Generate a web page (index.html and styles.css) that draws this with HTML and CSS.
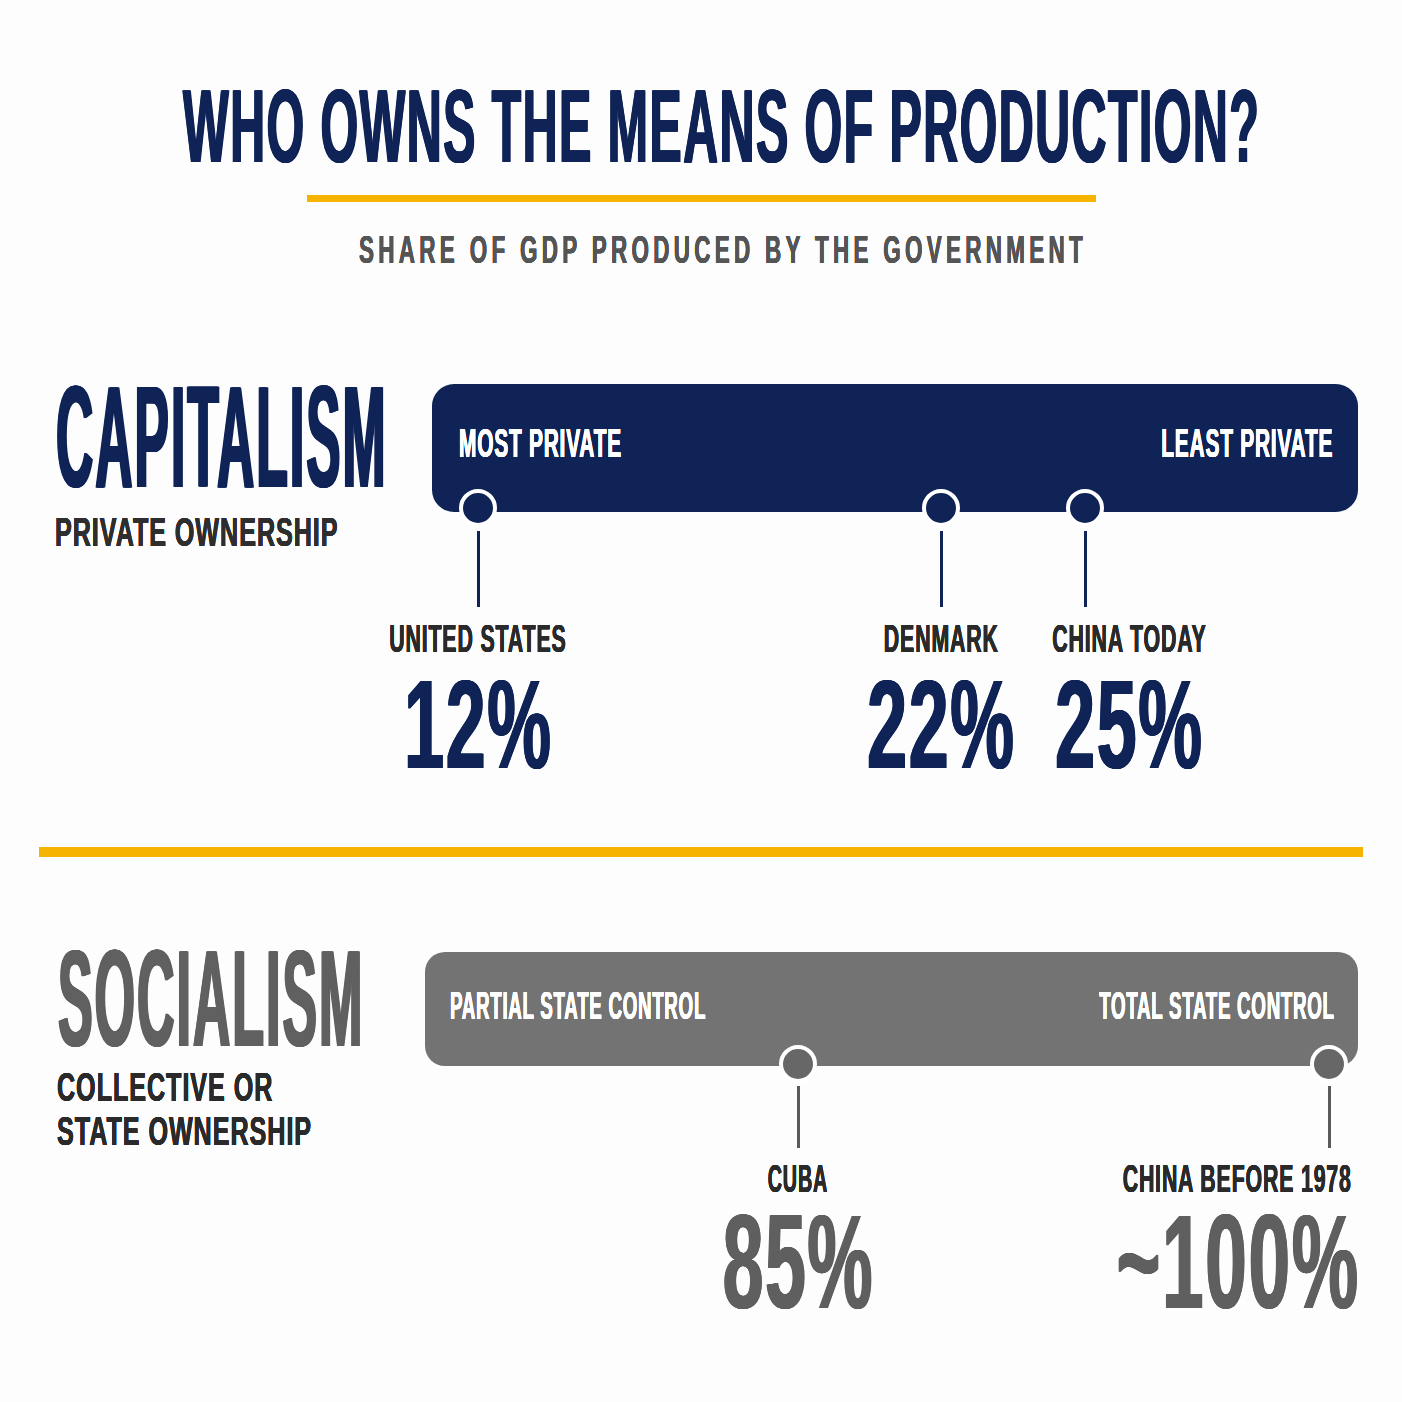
FILE: index.html
```html
<!DOCTYPE html>
<html lang="en">
<head>
<meta charset="utf-8">
<title>Who Owns the Means of Production?</title>
<link rel="stylesheet" href="styles.css">
</head>
<body>
<main class="page">
  <header class="masthead">
    <h1 class="title"><span class="sq">WHO OWNS THE MEANS OF PRODUCTION?</span></h1>
    <div class="accent-rule"></div>
    <p class="subtitle"><span class="sq">SHARE OF GDP PRODUCED BY THE GOVERNMENT</span></p>
  </header>

  <section class="system system--capitalism">
    <div class="system__name">
      <h2 class="system__title"><span class="sq">CAPITALISM</span></h2>
      <p class="system__desc"><span class="sq">PRIVATE OWNERSHIP</span></p>
    </div>
    <div class="scale">
      <div class="scale__bar">
        <div class="scale__end"><span class="sq sq--start">MOST PRIVATE</span></div>
        <div class="scale__end scale__end--finish"><span class="sq sq--end">LEAST PRIVATE</span></div>
      </div>
      <div class="marker" style="left:46px">
        <span class="marker__dot"></span>
        <span class="marker__stem"></span>
        <div class="marker__info">
          <span class="marker__label sq">UNITED STATES</span>
          <span class="marker__value sq">12%</span>
        </div>
      </div>
      <div class="marker" style="left:509px">
        <span class="marker__dot"></span>
        <span class="marker__stem"></span>
        <div class="marker__info">
          <span class="marker__label sq">DENMARK</span>
          <span class="marker__value sq">22%</span>
        </div>
      </div>
      <div class="marker" style="left:653px">
        <span class="marker__dot"></span>
        <span class="marker__stem"></span>
        <div class="marker__info marker__info--right">
          <span class="marker__label sq">CHINA TODAY</span>
          <span class="marker__value sq">25%</span>
        </div>
      </div>
    </div>
  </section>

  <div class="divider"></div>

  <section class="system system--socialism">
    <div class="system__name">
      <h2 class="system__title"><span class="sq">SOCIALISM</span></h2>
      <p class="system__desc"><span class="sq">COLLECTIVE OR<br>STATE OWNERSHIP</span></p>
    </div>
    <div class="scale">
      <div class="scale__bar">
        <div class="scale__end"><span class="sq sq--start">PARTIAL STATE CONTROL</span></div>
        <div class="scale__end scale__end--finish"><span class="sq sq--end">TOTAL STATE CONTROL</span></div>
      </div>
      <div class="marker" style="left:373px">
        <span class="marker__dot"></span>
        <span class="marker__stem"></span>
        <div class="marker__info">
          <span class="marker__label marker__label--short sq">CUBA</span>
          <span class="marker__value sq">85%</span>
        </div>
      </div>
      <div class="marker" style="left:904px">
        <span class="marker__dot"></span>
        <span class="marker__stem"></span>
        <div class="marker__info marker__info--left">
          <span class="marker__label marker__label--long sq">CHINA BEFORE 1978</span>
          <span class="marker__value marker__value--wide sq">~100%</span>
        </div>
      </div>
    </div>
  </section>
</main>
</body>
</html>
```

FILE: styles.css
```css
* {
  box-sizing: border-box;
}

body {
  margin: 0;
  background: #fdfdfd;
  font-family: "Liberation Sans", Arial, sans-serif;
  font-weight: 700;
}

.page {
  width: 1402px;
  height: 1402px;
  overflow: hidden;
}

/* condensed display type: glyphs squeezed horizontally;
   large type gets stems thickened by a short horizontal smear (--w)
   and letter-spacing (--ls) keeps the gaps open */
.sq {
  --w: 0px;
  --ls: var(--w);
  display: inline-block;
  white-space: nowrap;
  letter-spacing: var(--ls);
  transform: scaleX(var(--sx, 1));
  text-shadow:
    calc(var(--w) * 0.25) 0 0 currentColor,
    calc(var(--w) * 0.5) 0 0 currentColor,
    calc(var(--w) * 0.75) 0 0 currentColor,
    var(--w) 0 0 currentColor;
}

/* ---------- header ---------- */
.masthead {
  padding-top: 74px;
  display: flex;
  flex-direction: column;
  align-items: center;
}

.title {
  margin: 0;
  width: 100%;
  padding-left: 40px;
  display: flex;
  justify-content: center;
  font-size: 104px;
  line-height: 1;
  font-weight: 700;
  color: #0f2357;
}

.title .sq {
  --sx: 0.466;
  --w: 3px;
}

.accent-rule {
  width: 789px;
  height: 7px;
  margin-top: 17px;
  background: #f6b300;
}

.subtitle {
  margin: 28px 0 0;
  width: 100%;
  padding-left: 44px;
  display: flex;
  justify-content: center;
  font-size: 39px;
  line-height: 1;
  color: #555555;
}

.subtitle .sq {
  --sx: 0.575;
  --ls: 7.5px;
}

/* ---------- system rows ---------- */
.system {
  display: grid;
  padding: 0 44px 0 55px;
}

.system--capitalism {
  grid-template-columns: 377px 926px;
  margin-top: 96px;
}

.system--socialism {
  grid-template-columns: 368px 933px;
  padding-left: 57px;
  margin-top: 77px;
}

.system__title {
  margin: 0;
  font-size: 145px;
  line-height: 1;
  font-weight: 700;
  color: #0f2357;
}

.system__title .sq {
  --sx: 0.3545;
  --w: 6px;
  transform-origin: left center;
}

.system__desc {
  margin: 2px 0 0;
  font-size: 40px;
  line-height: 1;
  color: #2e2e2e;
}

.system__desc .sq {
  --sx: 0.629;
  --ls: 1.5px;
  transform-origin: left center;
}

.system--socialism .system__title {
  font-size: 137px;
  line-height: 0.95;
  color: #606060;
}

.system--socialism .system__title .sq {
  --sx: 0.38;
  --w: 5px;
}

.system--socialism .system__desc {
  margin-top: 1px;
  line-height: 44px;
  color: #2a2a2a;
}

/* ---------- scale bar ---------- */
.scale {
  position: relative;
  margin-top: 19px;
  height: 406px;
}

.scale__bar {
  height: 128px;
  padding: 39px 25px 0 27px;
  display: flex;
  align-items: flex-start;
  border-radius: 22px;
  background: #0f2357;
  color: #ffffff;
  font-size: 40px;
  line-height: 1;
}

.scale__end {
  flex: 1 1 0;
  min-width: 0;
  display: flex;
}

.scale__end--finish {
  justify-content: flex-end;
}

.scale__bar .sq {
  flex: none;
  --sx: 0.522;
  --ls: 1.5px;
}

.sq--start {
  transform-origin: left center;
}

.sq--end {
  transform-origin: right center;
}

.system--socialism .scale {
  margin-top: 18px;
  height: 380px;
}

.system--socialism .scale__bar {
  height: 114px;
  padding: 34px 23px 0 25px;
  border-radius: 20px;
  background: #737373;
  font-size: 39px;
}

.system--socialism .scale__bar .sq {
  --sx: 0.48;
}

/* ---------- markers (pins on the scale) ---------- */
.marker {
  position: absolute;
  top: 105px;
  width: 0;
  display: flex;
  flex-direction: column;
  align-items: center;
}

.marker__dot {
  flex: none;
  width: 38px;
  height: 38px;
  border: 4px solid #ffffff;
  border-radius: 50%;
  background: #0f2357;
}

.marker__stem {
  flex: none;
  width: 3px;
  height: 76px;
  margin-top: 4px;
  background: #0f2357;
}

.marker__info {
  width: 0;
  margin-top: 13px;
  display: flex;
  flex-direction: column;
  align-items: center;
}

.marker__info--right {
  transform: translateX(44px);
}

.marker__info--left {
  transform: translateX(-92px);
}

.marker__label {
  --sx: 0.562;
  --ls: 1.5px;
  font-size: 38px;
  line-height: 1;
  color: #2a2a2a;
}

.marker__value {
  --sx: 0.564;
  --w: 3px;
  margin-top: 9px;
  font-size: 127px;
  line-height: 0.9;
  color: #0f2357;
}

.system--socialism .marker {
  top: 93px;
}

.system--socialism .marker__dot {
  background: #676767;
}

.system--socialism .marker__stem {
  height: 62px;
  margin-top: 3px;
  background: #5a5a5a;
}

.system--socialism .marker__info {
  margin-top: 12px;
}

.marker__label--short {
  --sx: 0.52;
}

.marker__label--long {
  --sx: 0.561;
}

.system--socialism .marker__value {
  --sx: 0.55;
  margin-top: 5px;
  font-size: 133px;
  color: #5f5f5f;
}

.system--socialism .marker__value--wide {
  --sx: 0.562;
}

/* ---------- divider ---------- */
.divider {
  height: 10px;
  margin: 57px 39px 0;
  background: #f6b300;
}
```
